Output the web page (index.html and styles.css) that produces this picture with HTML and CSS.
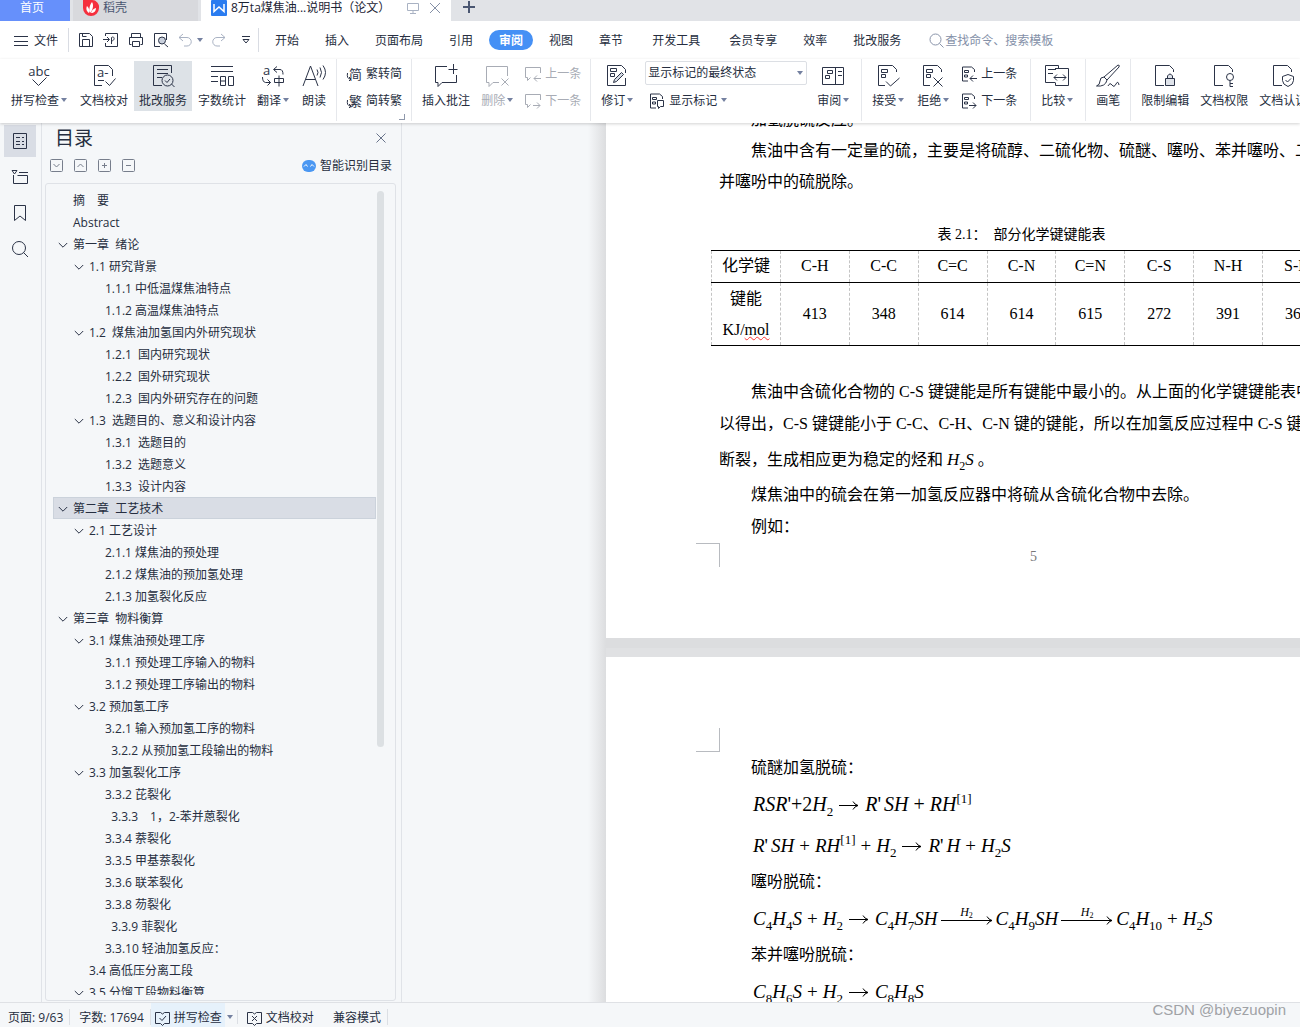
FILE: index.html
```html
<!DOCTYPE html>
<html lang="zh-CN">
<head>
<meta charset="utf-8">
<title>8万ta煤焦油...说明书（论文）</title>
<link rel="stylesheet" href="styles.css">
</head>
<body>
<svg class="defs" aria-hidden="true">
  <symbol id="caret" viewBox="0 0 6 4"><path d="M0 0h6L3 4z" fill="#7480a0" stroke="none"/></symbol>
  <symbol id="chev" viewBox="0 0 10 10"><path d="M.8 3l4.2 4.2L9.2 3"/></symbol>
  <symbol id="marks" viewBox="0 0 24 24"><path d="M20.500 8V5.500l-4-4H2.500v20H9M5.500 8.500v-3h6v3zM5.500 13.500v-3h4v3z"/></symbol>
  <symbol id="page" viewBox="0 0 24 24"><path d="M20.500 8V5.500l-4-4H2.500v20H11"/></symbol>
  <symbol id="smallmarks" viewBox="0 0 16 16"><path d="M13.500 6V3.500l-3-2.500H1.500v14H7M3.500 6.500v-2h4v2zM3.500 11v-2h3v2z"/></symbol>
  <symbol id="arr" viewBox="0 0 20 12"><path d="M0 6.500h19M14 2.500q1.500 3 5 4q-3.500 1-5 4"/></symbol>
  <symbol id="longarr" viewBox="0 0 52 12"><path d="M0 6.500h51M46 2.500q1.500 3 5 4q-3.500 1-5 4"/></symbol>
</svg>

<header>
  <nav class="tabs" aria-label="文档标签">
    <a class="tab tab-home" href="#home">首页</a>
    <a class="tab tab-store" href="#store">
      <svg width="16" height="16" viewBox="0 0 16 16"><path d="M0 0h9a7 7 0 0 1 7 8 8 8 0 0 1-8 8 8 8 0 0 1-8-8z" fill="#f5303e" stroke="none"/><path d="M7 13C6 10 6 6 9 2c2 3 1 8-2 11zM6 13C3 11 3 8 4 6c2 2 3 4 2 7zM8 13c1-3 2-4 5-5 0 3-2 5-5 5z" fill="#fff" stroke="none"/></svg>
      稻壳</a>
    <div class="tab tab-doc">
      <svg width="16" height="16" viewBox="0 0 16 16"><rect width="16" height="16" rx="1" fill="#2a7cf0" stroke="none"/><path d="M3 4v7.500l5-4.500 5 4.500V4" stroke="#fff" stroke-width="1.500"/></svg>
      <span class="doc-name">8万ta煤焦油...说明书（论文）</span>
      <svg class="pale" width="12" height="12" viewBox="0 0 12 12"><path d="M.5 1.500h11v7H.5zM6 8.500v3M3 11.500h6"/></svg>
      <button class="plain" aria-label="关闭"><svg class="grey" width="12" height="12" viewBox="0 0 12 12"><path d="M1 1l10 10M11 1L1 11"/></svg></button>
    </div>
    <button class="plain add" aria-label="新建"><svg width="12" height="12" viewBox="0 0 12 12"><path d="M6 0v12M0 6h12" stroke="#4a5671" stroke-width="2"/></svg></button>
  </nav>

  <div class="menu">
    <button class="plain file"><svg width="14" height="12" viewBox="0 0 14 12"><path d="M0 1.500h14M0 6.500h14M0 10.500h14"/></svg>文件</button>
    <div class="quick">
      <button class="plain" aria-label="保存"><svg width="16" height="16" viewBox="0 0 16 16"><path d="M3 14.500H1.500v-13h10l3 3v10H3M4.500 14.500v-7h7v7M4.500 1.500v3h4"/></svg></button>
      <button class="plain" aria-label="输出"><svg width="16" height="16" viewBox="0 0 16 16"><path d="M2.500 4V1.500h12v13h-12V11M0 7.500h6M4 5l2.500 2.500L4 10M8.500 12V5.500c3-2 4 3 0 3.500"/></svg></button>
      <button class="plain" aria-label="打印"><svg width="16" height="16" viewBox="0 0 16 16"><path d="M3.500 5.500v-4h9v4M3.500 12.500h-2v-7h13v7h-2M4.500 9.500h7v5h-7z"/></svg></button>
      <button class="plain" aria-label="预览"><svg width="16" height="16" viewBox="0 0 16 16"><path d="M7 14.500H1.500v-13h12V8M11.500 12l3.500 3"/><circle cx="9" cy="8.500" r="3.500" fill="#c9d0dc"/></svg></button>
      <button class="plain undo" aria-label="撤销"><svg class="pale" width="14" height="14" viewBox="0 0 14 14"><path d="M5 1L1 4.500 5 8M1 4.500h8a4 4 0 0 1 0 8.500H6"/></svg><svg class="car"><use href="#caret"/></svg></button>
      <button class="plain" aria-label="恢复"><svg class="pale" width="14" height="14" viewBox="0 0 14 14"><path d="M9 1l4 3.500L9 8M13 4.500H5A4 4 0 0 0 5 13h3"/></svg></button>
      <button class="plain more" aria-label="更多"><svg width="8" height="8" viewBox="0 0 8 8"><path d="M0 .5h8M1 3.500h6L4 7z"/></svg></button>
    </div>
    <nav class="cats" aria-label="功能区">
      <a href="#start">开始</a><a href="#insert">插入</a><a href="#layout">页面布局</a><a href="#ref">引用</a><a class="on" href="#review">审阅</a><a href="#view">视图</a><a href="#chapter">章节</a><a class="apart" href="#dev">开发工具</a><a class="apart" href="#vip">会员专享</a><a href="#tools">效率</a><a href="#fix">批改服务</a>
    </nav>
    <label class="find"><svg width="15" height="15" viewBox="0 0 15 15"><circle cx="6.500" cy="6.500" r="5.500"/><path d="M10.500 10.500l4 4"/></svg><input type="text" placeholder="查找命令、搜索模板" aria-label="查找命令"></label>
  </div>

  <div class="ribbon">
    <button class="big drop"><svg viewBox="0 0 24 24"><text x="12" y="12" text-anchor="middle" class="glyph">abc</text><path d="M5.500 15.500l6 6 8-8"/></svg><span>拼写检查<svg class="car"><use href="#caret"/></svg></span></button>
    <button class="big"><svg viewBox="0 0 24 24"><path d="M20.500 12V5.500l-4-4H2.500v20H10M6 16.500h6M13.500 17.500l4 4 6-7"/><text x="5" y="13" class="glyph">a-</text></svg><span>文档校对</span></button>
    <button class="big on"><svg viewBox="0 0 24 24"><path d="M20.500 9V1.500h-18v20H11M6 5.500h11M6 9.500h11M6 13.500h5M20.500 20l3 3"/><circle cx="16.500" cy="16.500" r="5.500"/><path d="M14 16.500l2 2 3-3.500"/></svg><span>批改服务</span></button>
    <button class="big"><svg viewBox="0 0 24 24"><path d="M1 2.500h22M1 7.500h22M1 12.500h7M1 17.500h7M10.500 12.500h5v9h-5zM18.500 12.500h5v9h-5zM10.500 17h5"/></svg><span>字数统计</span></button>
    <button class="big drop"><svg viewBox="0 0 24 24"><text x="2" y="11" class="glyph">a</text><path d="M13 5.500h6q3 0 3 5M16 2.500l-3.500 3 3.500 3M1.500 13q0 5 3 5.500h5M6.500 15.500l3 3-3 3M13.500 14.500h9v4h-9zM18 11.500v11"/></svg><span>翻译<svg class="car"><use href="#caret"/></svg></span></button>
    <button class="big"><svg viewBox="0 0 24 24"><path d="M1 22L8.500 2 16 22M4 15.500h9M15 5.500q2 3 0 6M18 3.500q3 5 0 10M21 1.500q5 7 0 14"/></svg><span>朗读</span></button>
    <i class="sep"></i>
    <div class="stack corner">
      <button class="small"><svg viewBox="0 0 16 16"><text x="3" y="13" class="han">简</text><path d="M1.500 7q-1 6 3 6M3 11l2 2-2 2"/></svg>繁转简</button>
      <button class="small"><svg viewBox="0 0 16 16"><text x="3" y="13" class="han">繁</text><path d="M1.500 7q-1 6 3 6M3 11l2 2-2 2"/></svg>简转繁</button>
    </div>
    <i class="sep"></i>
    <button class="big"><svg viewBox="0 0 24 24"><path d="M13 2.500H1.500v16H4v4l4-4h14.500V11M19.500 0v10M14.500 5.500h9"/></svg><span>插入批注</span></button>
    <button class="big drop" disabled><svg viewBox="0 0 24 24"><path d="M22.500 12V2.500h-21v16H4v4l4-4h6M16.500 14.500l7 7M23.500 14.500l-7 7"/></svg><span>删除<svg class="car"><use href="#caret"/></svg></span></button>
    <div class="stack">
      <button class="small" disabled><svg viewBox="0 0 16 16"><path d="M15.500 7V1.500H.5v10h2v3l3-3M16 12.500H9M12 9.500l-3 3 3 3"/></svg>上一条</button>
      <button class="small" disabled><svg viewBox="0 0 16 16"><path d="M15.500 7V1.500H.5v10h2v3l3-3M8 12.500h7M12 9.500l3 3-3 3"/></svg>下一条</button>
    </div>
    <i class="sep"></i>
    <button class="big drop"><svg viewBox="0 0 24 24"><path d="M20.500 9V5.500l-4-4h-14v20h18V14M5.500 7.500v-3h6v3zM5.500 12.500v-3h4v3z"/><path d="M8.500 18.500l1-3 7-7 2 2-7 7z" fill="#d5dae3"/></svg><span>修订<svg class="car"><use href="#caret"/></svg></span></button>
    <div class="stack state">
      <span class="pick"><select aria-label="显示状态"><option>显示标记的最终状态</option></select><svg class="car"><use href="#caret"/></svg></span>
      <button class="small"><svg viewBox="0 0 16 16"><use href="#smallmarks"/><path d="M8.500 7.500h6v6h-3l-2 2v-2h-1z" fill="#fff"/></svg>显示标记<svg class="car"><use href="#caret"/></svg></button>
    </div>
    <button class="big drop"><svg viewBox="0 0 24 24"><path d="M1.500 3.500h21v17h-21zM14.500 3.500v17M17 7.500h4M17 11.500h4M6.500 9.500v-3h5v3zM4.500 14.500v-3h4v3z"/></svg><span>审阅<svg class="car"><use href="#caret"/></svg></span></button>
    <i class="sep"></i>
    <button class="big drop"><svg viewBox="0 0 24 24"><use href="#marks"/><path d="M10 17.500l4.500 4.500 9-8"/></svg><span>接受<svg class="car"><use href="#caret"/></svg></span></button>
    <button class="big drop"><svg viewBox="0 0 24 24"><use href="#marks"/><path d="M12.500 13.500l9 9M21.500 13.500l-9 9"/></svg><span>拒绝<svg class="car"><use href="#caret"/></svg></span></button>
    <div class="stack roomy">
      <button class="small"><svg viewBox="0 0 16 16"><use href="#smallmarks"/><path d="M16 12.500H9M12 9.500l-3 3 3 3"/></svg>上一条</button>
      <button class="small"><svg viewBox="0 0 16 16"><use href="#smallmarks"/><path d="M8 12.500h7M12 9.500l3 3-3 3"/></svg>下一条</button>
    </div>
    <i class="sep"></i>
    <button class="big drop"><svg viewBox="0 0 24 24"><path d="M10 18.500H.5v-17h13v3M3 5.500h8M3 9.500h5M10 4.500h13.500v17h-13v-3M9 13.500h12M12 10.500l-3 3 3 3M18 10.500l3 3-3 3"/></svg><span>比较<svg class="car"><use href="#caret"/></svg></span></button>
    <i class="sep"></i>
    <button class="big"><svg viewBox="0 0 24 24"><path d="M8 13L22 1q2 0 1 2L11 16zM8 13q-4 0-4 4 0 4-3.500 5 9 1 10.500-6M12 22q2-4 4-1t4-1 3 1"/></svg><span>画笔</span></button>
    <i class="sep"></i>
    <button class="big"><svg viewBox="0 0 24 24"><use href="#page"/><path d="M12.500 14.500h9v7h-9zM14.500 14v-2q2.500-4 5 0v2" fill="#dfe3ea"/></svg><span>限制编辑</span></button>
    <button class="big"><svg viewBox="0 0 24 24"><use href="#page"/><circle cx="18" cy="13" r="3.500"/><path d="M18 16.500v6M18 19.500h3M18 22.500h3"/></svg><span>文档权限</span></button>
    <button class="big"><svg viewBox="0 0 24 24"><use href="#page"/><path d="M17 10.500l5.500 2v4q0 4-5.500 6-5.500-2-5.500-6v-4zM14.500 16l2 2 3.500-3.500"/></svg><span>文档认证</span></button>
  </div>
</header>

<main>
  <nav class="rail" aria-label="侧栏">
    <button class="plain on" aria-label="目录"><svg width="16" height="18" viewBox="0 0 16 18"><path d="M1.500 1.500h13v15h-13zM4 5.500h4M4 9.500h4M4 12.500h4M10 5.500h2M10 9.500h2M10 12.500h2"/></svg></button>
    <button class="plain" aria-label="章节导航"><svg width="18" height="16" viewBox="0 0 18 16"><path d="M1 1.500h5L3.500 5zM8 3.500h9M2.500 6v8.500h14v-8h-10"/></svg></button>
    <button class="plain" aria-label="书签"><svg width="14" height="18" viewBox="0 0 14 18"><path d="M1.500 1.500h11v15L7 12l-5.500 4.500z"/></svg></button>
    <button class="plain" aria-label="查找"><svg width="18" height="18" viewBox="0 0 18 18"><circle cx="8" cy="8" r="6.500"/><path d="M12.500 12.500l4.500 4.500"/></svg></button>
  </nav>

  <aside class="panel">
    <div class="head"><h2>目录</h2><button class="plain" aria-label="关闭目录"><svg width="10" height="10" viewBox="0 0 10 10"><path d="M.5.5l9 9M9.500.5l-9 9"/></svg></button></div>
    <div class="tools">
      <button class="plain" aria-label="展开"><svg viewBox="0 0 13 13"><rect x=".5" y=".5" width="12" height="12" rx="1"/><path d="M3.500 5l3 3 3-3"/></svg></button>
      <button class="plain" aria-label="折叠"><svg viewBox="0 0 13 13"><rect x=".5" y=".5" width="12" height="12" rx="1"/><path d="M3.500 8l3-3 3 3"/></svg></button>
      <button class="plain" aria-label="增加"><svg viewBox="0 0 13 13"><rect x=".5" y=".5" width="12" height="12" rx="1"/><path d="M4 6.500h5M6.500 4v5"/></svg></button>
      <button class="plain" aria-label="减少"><svg viewBox="0 0 13 13"><rect x=".5" y=".5" width="12" height="12" rx="1"/><path d="M4 6.500h5"/></svg></button>
      <a class="smart" href="#smart"><svg width="14" height="12" viewBox="0 0 14 12"><rect width="14" height="12" rx="6" fill="#4a97f2" stroke="none"/><path d="M2 6.500l2-2 1.500 2M8.500 6.500l1.500-2 2 2" stroke="#fff"/></svg>智能识别目录</a>
    </div>
    <div class="tree">
      <ul>
        <li class="leaf"><a href="#t">摘　要</a></li>
        <li class="leaf"><a href="#t">Abstract</a></li>
        <li><svg><use href="#chev"/></svg><a href="#t">第一章&nbsp; 绪论</a></li>
        <li class="l2"><svg><use href="#chev"/></svg><a href="#t">1.1 研究背景</a></li>
        <li class="l3 leaf"><a href="#t">1.1.1 中低温煤焦油特点</a></li>
        <li class="l3 leaf"><a href="#t">1.1.2 高温煤焦油特点</a></li>
        <li class="l2"><svg><use href="#chev"/></svg><a href="#t">1.2&nbsp; 煤焦油加氢国内外研究现状</a></li>
        <li class="l3 leaf"><a href="#t">1.2.1&nbsp; 国内研究现状</a></li>
        <li class="l3 leaf"><a href="#t">1.2.2&nbsp; 国外研究现状</a></li>
        <li class="l3 leaf"><a href="#t">1.2.3&nbsp; 国内外研究存在的问题</a></li>
        <li class="l2"><svg><use href="#chev"/></svg><a href="#t">1.3&nbsp; 选题目的、意义和设计内容</a></li>
        <li class="l3 leaf"><a href="#t">1.3.1&nbsp; 选题目的</a></li>
        <li class="l3 leaf"><a href="#t">1.3.2&nbsp; 选题意义</a></li>
        <li class="l3 leaf"><a href="#t">1.3.3&nbsp; 设计内容</a></li>
        <li class="on"><svg><use href="#chev"/></svg><a href="#t">第二章&nbsp; 工艺技术</a></li>
        <li class="l2"><svg><use href="#chev"/></svg><a href="#t">2.1 工艺设计</a></li>
        <li class="l3 leaf"><a href="#t">2.1.1 煤焦油的预处理</a></li>
        <li class="l3 leaf"><a href="#t">2.1.2 煤焦油的预加氢处理</a></li>
        <li class="l3 leaf"><a href="#t">2.1.3 加氢裂化反应</a></li>
        <li><svg><use href="#chev"/></svg><a href="#t">第三章&nbsp; 物料衡算</a></li>
        <li class="l2"><svg><use href="#chev"/></svg><a href="#t">3.1 煤焦油预处理工序</a></li>
        <li class="l3 leaf"><a href="#t">3.1.1 预处理工序输入的物料</a></li>
        <li class="l3 leaf"><a href="#t">3.1.2 预处理工序输出的物料</a></li>
        <li class="l2"><svg><use href="#chev"/></svg><a href="#t">3.2 预加氢工序</a></li>
        <li class="l3 leaf"><a href="#t">3.2.1 输入预加氢工序的物料</a></li>
        <li class="l3 leaf"><a href="#t">&nbsp;&nbsp;3.2.2 从预加氢工段输出的物料</a></li>
        <li class="l2"><svg><use href="#chev"/></svg><a href="#t">3.3 加氢裂化工序</a></li>
        <li class="l3 leaf"><a href="#t">3.3.2 芘裂化</a></li>
        <li class="l3 leaf"><a href="#t">&nbsp;&nbsp;3.3.3　1，2-苯并蒽裂化</a></li>
        <li class="l3 leaf"><a href="#t">3.3.4 萘裂化</a></li>
        <li class="l3 leaf"><a href="#t">3.3.5 甲基萘裂化</a></li>
        <li class="l3 leaf"><a href="#t">3.3.6 联苯裂化</a></li>
        <li class="l3 leaf"><a href="#t">3.3.8 芴裂化</a></li>
        <li class="l3 leaf"><a href="#t">&nbsp;&nbsp;3.3.9 菲裂化</a></li>
        <li class="l3 leaf"><a href="#t">3.3.10 轻油加氢反应：</a></li>
        <li class="l2 leaf"><a href="#t">3.4 高低压分离工段</a></li>
        <li class="l2"><svg><use href="#chev"/></svg><a href="#t">3.5 分馏工段物料衡算</a></li>
      </ul>
      <div class="thumb"></div>
    </div>
  </aside>

  <section class="desk">
    <article class="sheet first">
      <p class="in">加氢脱硫反应。</p>
      <p class="in">焦油中含有一定量的硫，主要是将硫醇、二硫化物、硫醚、噻吩、苯并噻吩、二</p>
      <p>并噻吩中的硫脱除。</p>
      <table>
        <caption>表 2.1：&nbsp; 部分化学键键能表</caption>
        <tr><th>化学键</th><td>C-H</td><td>C-C</td><td>C=C</td><td>C-N</td><td>C=N</td><td>C-S</td><td>N-H</td><td>S-H</td></tr>
        <tr class="tall"><th>键能<br>KJ/<span class="typo">mol</span></th><td>413</td><td>348</td><td>614</td><td>614</td><td>615</td><td>272</td><td>391</td><td>363</td></tr>
      </table>
      <div class="body">
        <p class="in">焦油中含硫化合物的 C-S 键键能是所有键能中最小的。从上面的化学键键能表中</p>
        <p>以得出，C-S 键键能小于 C-C、C-H、C-N 键的键能，所以在加氢反应过程中 C-S 键</p>
        <p class="loose">断裂，生成相应更为稳定的烃和 <span class="chem"><i>H</i><sub>2</sub><i>S</i></span> 。</p>
        <p class="in">煤焦油中的硫会在第一加氢反应器中将硫从含硫化合物中去除。</p>
        <p class="in">例如：</p>
      </div>
      <footer><i class="crop low"></i><span>5</span></footer>
    </article>
    <article class="sheet second">
      <i class="crop top"></i>
      <p class="in">硫醚加氢脱硫：</p>
      <p class="eq lead"><i>RSR</i>'+2<i>H</i><sub>2</sub><svg class="arr"><use href="#arr"/></svg><i>R</i>'<b></b><i>SH</i><em>+</em><i>RH</i><sup>[1]</sup></p>
      <p class="eq"><i>R</i>'<b></b><i>SH</i><em>+</em><i>RH</i><sup>[1]</sup><em>+</em><i>H</i><sub>2</sub><svg class="arr"><use href="#arr"/></svg><i>R</i>'<b></b><i>H</i><em>+</em><i>H</i><sub>2</sub><i>S</i></p>
      <p class="in">噻吩脱硫：</p>
      <p class="eq"><i>C</i><sub>4</sub><i>H</i><sub>4</sub><i>S</i><em>+</em><i>H</i><sub>2</sub><svg class="arr"><use href="#arr"/></svg><i>C</i><sub>4</sub><i>H</i><sub>7</sub><i>SH</i><span class="over"><small><i>H</i><sub>2</sub></small><svg><use href="#longarr"/></svg></span><i>C</i><sub>4</sub><i>H</i><sub>9</sub><i>SH</i><span class="over"><small><i>H</i><sub>2</sub></small><svg><use href="#longarr"/></svg></span><i>C</i><sub>4</sub><i>H</i><sub>10</sub><em>+</em><i>H</i><sub>2</sub><i>S</i></p>
      <p class="in">苯并噻吩脱硫：</p>
      <p class="eq"><i>C</i><sub>8</sub><i>H</i><sub>6</sub><i>S</i><em>+</em><i>H</i><sub>2</sub><svg class="arr"><use href="#arr"/></svg><i>C</i><sub>8</sub><i>H</i><sub>8</sub><i>S</i></p>
    </article>
  </section>
</main>

<footer class="status">
  <span class="cell">页面: 9/63</span>
  <span class="cell">字数: 17694</span>
  <button class="plain spell"><svg width="15" height="15" viewBox="0 0 15 15"><path d="M5.500 1.500h-5v11h5l2 2 2-2h5v-11h-5l-2 1.500zM4.500 7l2.500 2.500 4-4.500"/></svg>拼写检查</button>
  <span class="cell arrow"><svg class="car"><use href="#caret"/></svg></span>
  <button class="plain proof"><svg width="15" height="15" viewBox="0 0 15 15"><path d="M5.500 1.500h-5v11h5l2 2 2-2h5v-11h-5l-2 1.500zM5 5l5 5M10 5l-5 5"/></svg>文档校对</button>
  <span class="cell">兼容模式</span>
  <span class="mark">CSDN @biyezuopin</span>
</footer>
</body>
</html>
```
FILE: styles.css
```css
* { box-sizing: border-box; }

body {
  margin: 0;
  height: 100vh;
  display: flex;
  flex-direction: column;
  overflow: hidden;
  background: #fff;
  color: #262e40;
  font: 12px/18px "Open Sans", "Noto Sans CJK SC", sans-serif;
}

svg { fill: none; stroke: #2b3347; flex: none; }
a { color: inherit; text-decoration: none; }
button, input, select { font: inherit; color: inherit; }
.defs { position: absolute; width: 0; height: 0; }
.plain { display: flex; align-items: center; padding: 0; border: 0; background: none; }
.pale { stroke: #a9b2c3; }
.grey { stroke: #8590a6; }
.car { width: 6px; height: 4px; margin: 0 0 3px 2px; }

/* document tabs */
.tabs { display: flex; height: 21px; gap: 3px; background: #e1e3e7; overflow: hidden; }
.tab { display: flex; align-items: center; height: 21px; padding-bottom: 6px; line-height: 14px; }
.tab-home { width: 70px; justify-content: center; padding-right: 6px; background: #6690fb; color: #fff; }
.tab-store { width: 125px; padding-left: 10px; gap: 4px; background: #d8d9dd; color: #4a5671; }
.tab-doc { width: 250px; padding-left: 10px; padding-right: 10px; gap: 4px; background: #fff; color: #1c2333; }
.doc-name { flex: 1; white-space: nowrap; }
.tab-doc .plain { margin-left: 6px; }
.add { height: 13px; margin-left: 9px; }

/* menu row */
.menu { display: flex; align-items: center; height: 38px; padding-left: 14px; white-space: nowrap; }
.file { gap: 6px; height: 24px; padding: 2px 10px 0 0; border-right: 1px solid #d9dce3; }
.quick { display: flex; align-items: center; gap: 9px; height: 24px; width: 190px; padding-left: 9px; border-right: 1px solid #d9dce3; }
.undo { gap: 3px; }
.undo .car { margin-bottom: 0; }
.more { margin-left: 7px; }
.cats { display: flex; align-items: center; padding-left: 3px; }
.cats a { padding: 2px 13px 0; line-height: 18px; }
.cats .on { padding: 2px 10px 0; margin: 0 3px; border-radius: 10px; background: #4590f5; color: #fff; font-weight: 700; }
.cats .apart { margin-left: 3px; }
.find { display: flex; align-items: center; gap: 1px; padding-left: 15px; }
.find svg { stroke: #8a94aa; }
.find input { width: 140px; padding: 2px 0 0; border: 0; background: none; }
.find input::placeholder { color: #8490a8; opacity: 1; }

/* ribbon */
.ribbon {
  position: relative;
  z-index: 1;
  display: flex;
  gap: 1px;
  height: 64px;
  padding: 2px 0 0 6px;
  background: #fff;
  box-shadow: 0 1px 3px rgba(0, 0, 0, .18);
  white-space: nowrap;
}
.ribbon button { border: 0; background: none; flex: none; }
.ribbon .big { display: flex; flex-direction: column; align-items: center; gap: 4px; height: 50px; padding: 3px 5px 1px; }
.big > svg { width: 24px; height: 24px; }
.big span { display: flex; align-items: center; }
.ribbon .drop { padding-right: 7px; }
.ribbon .on { background: #dde2e7; }
.sep { flex: none; width: 1px; height: 62px; margin: -2px 4px 0; background: #e6e8ec; }
.stack { display: flex; flex-direction: column; gap: 3px; flex: none; }
.small { display: flex; align-items: center; gap: 4px; height: 24px; padding: 2px 4px 0; }
.small > svg:first-child { width: 16px; height: 16px; }
.small .car { margin-left: 0; }
.roomy { padding-right: 4px; }
.ribbon button:disabled { color: #a8acb5; }
.ribbon button:disabled > svg { stroke: #a8acb5; }
.state { padding: 0 4px; }
.pick { display: flex; align-items: center; width: 162px; height: 24px; padding-right: 3px; border: 1px solid #dcdfe4; border-radius: 2px; }
.pick select { flex: 1; height: 22px; padding: 0 2px; border: 0; background: none; appearance: none; }
.pick .car { margin-bottom: 0; }
.corner { position: relative; }
.corner::after { content: ""; position: absolute; right: 1px; top: 53px; width: 5px; height: 5px; border: solid #8f98ab; border-width: 0 1px 1px 0; }
.glyph { font: 13px "Open Sans", sans-serif; fill: #2b3347; stroke: none; }
.han { font: 13px "Noto Sans CJK SC", sans-serif; fill: #2b3347; stroke: none; }

/* work area */
main { flex: 1; display: flex; min-height: 0; background: #f5f7f9; }
.rail { display: flex; flex-direction: column; gap: 4px; width: 42px; padding: 2px 5px 0 4px; border-right: 1px solid #e0e3e8; flex: none; }
.rail button { height: 32px; justify-content: center; }
.rail .on { background: #d9dde5; }
.panel { display: flex; flex-direction: column; width: 360px; padding: 0 5px 1px 3px; border-right: 1px solid #e0e3e8; flex: none; }
.head { display: flex; align-items: center; justify-content: space-between; height: 30px; padding: 0 10px; }
h2 { margin: 0; font-size: 19px; font-weight: 400; line-height: 30px; }
.head svg { stroke: #68738a; }
.tools { display: flex; align-items: center; gap: 11px; height: 24px; padding-left: 5px; margin-bottom: 6px; }
.tools button svg { width: 13px; height: 13px; stroke: #777e8c; }
.smart { display: flex; align-items: center; gap: 4px; margin-left: auto; padding: 2px 4px 0 0; }
.tree { flex: 1; display: flex; min-height: 0; padding: 5px 11px 5px 7px; border: 1px solid #dfe2e7; border-radius: 3px; }
.tree ul { flex: 1; margin: 0; padding: 0; list-style: none; overflow: hidden; }
.tree li { display: flex; align-items: center; gap: 5px; height: 22px; padding: 2px 0 0 5px; line-height: 20px; white-space: nowrap; }
.tree li svg { width: 10px; height: 10px; }
.leaf::before { content: ""; width: 10px; }
.tree .l2 { padding-left: 21px; }
.tree .l3 { padding-left: 37px; }
.tree .on { background: #d9dde5; outline: 1px solid #cbd2db; outline-offset: -1px; }
.thumb { width: 7px; height: 69%; margin: 2px 0 0 1px; border-radius: 4px; background: #dce0e3; }

/* document */
.desk { flex: 1; min-width: 0; padding-left: 204px; overflow: hidden; background: linear-gradient(to right, #f5f7f9 186px, #dcdddf 204px); color: #000; }
.sheet { width: 854px; padding-left: 113px; background: #fff; font: 16px/32px "Liberation Serif", "Noto Sans CJK SC", serif; white-space: nowrap; }
.sheet p { margin: 0; }
.sheet .in { padding-left: 32px; }
.first { margin-top: -19px; padding-bottom: 67px; }
.first > p { line-height: 31px; }
table { table-layout: fixed; width: 621px; margin: 22px 0 0 -8px; border-collapse: collapse; }
caption { font-size: 14px; line-height: 31px; }
th, td { height: 32px; padding: 0 0 2px; border: 1px dashed #c4c4c4; border-top: 1px solid #000; border-bottom: 1px solid #000; font-weight: 400; text-align: center; line-height: 29px; }
.tall th { line-height: 31px; padding: 0; }
.typo { text-decoration: underline wavy #f33 1px; }
.body { padding-top: 30px; }
.body .loose { line-height: 39px; }
.chem { font-size: 17px; line-height: 20px; }
sub, sup { font-size: 12px; line-height: 0; }
sub { vertical-align: -5px; }
sup { vertical-align: 8px; }
.sheet footer { display: flex; align-items: flex-start; margin-left: -23px; color: #777; font-size: 14px; line-height: 28px; }
.sheet footer span { margin-left: 310px; }
.crop { display: block; width: 24px; height: 24px; border: solid #b8bbc0; border-width: 0; }
.low { border-width: 1px 1px 0 0; }
.top { border-width: 0 1px 1px 0; margin-left: -23px; }
.second { margin-top: 19px; padding-top: 71px; min-height: 600px; box-shadow: 0 -9px 0 #e0e1e3, 0 -19px 0 #dcdddf; }
.eq { padding-left: 34px; font-size: 19px; line-height: 41px; }
.lead { font-size: 20px; }
.eq sub, .eq sup { font-size: 13px; }
.eq em { font-style: normal; margin: 0 5px; }
.eq b { margin-left: 3px; }
.arr { width: 20px; height: 12px; margin: 0 6px; stroke: #000; }
.over { display: inline-flex; flex-direction: column; align-items: center; width: 52px; margin: 0 3px; line-height: 12px; vertical-align: 9px; }
.over small { font-size: 12px; }
.eq .over sub { font-size: 8px; vertical-align: -2px; }
.over svg { width: 52px; height: 12px; margin-top: -4px; stroke: #000; }

/* status bar */
.status { display: flex; align-items: center; height: 25px; padding: 4px 14px 0 8px; background: #f5f7f9; border-top: 1px solid #dfe1e5; white-space: nowrap; flex: none; }
.cell { padding-right: 6px; margin-right: 9px; border-right: 1px solid #dcdfe4; line-height: 14px; }
.cell, .spell, .proof { padding-top: 2px; }
.spell, .proof { gap: 4px; line-height: 18px; }
.status .spell { margin: -4px 0 0 -9px; padding: 6px 3px 0 4px; background: #e6f1fb; }
.arrow { display: flex; align-items: center; height: 14px; padding: 0 4px 0 0; }
.arrow .car { margin-bottom: 0; }
.proof { margin-right: 19px; }
.mark { margin-left: auto; margin-top: -16px; font: 15px "Liberation Sans", sans-serif; color: #a0a2a6; }
```
